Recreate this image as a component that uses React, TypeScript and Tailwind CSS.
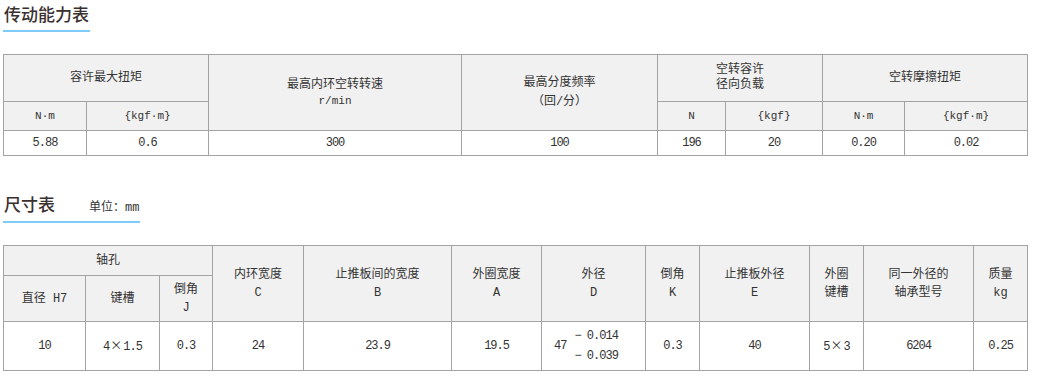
const FONT = "font-['Liberation_Mono','Noto_Sans_CJK_SC',monospace]";

function Th({ children, colSpan, rowSpan, className = "" }: { children: React.ReactNode; colSpan?: number; rowSpan?: number; className?: string }) {
  return (
    <th
      colSpan={colSpan}
      rowSpan={rowSpan}
      className={`border border-[#a3a3a3] bg-[#f1f1f1] p-0 text-center align-middle font-normal ${className}`}
    >
      {children}
    </th>
  );
}

function Td({ children, className = "" }: { children: React.ReactNode; className?: string }) {
  return (
    <td className={`border border-[#a3a3a3] bg-white p-0 text-center align-middle tracking-[-1px] ${className}`}>
      {children}
    </td>
  );
}

// full-width multiplication sign, as in the original CJK font
const X = () => <span className="font-['Noto_Sans_CJK_SC',sans-serif] tracking-normal mx-[1px]">×</span>;

function Heading({ title, unit }: { title: string; unit?: string }) {
  return (
    <div className="inline-flex items-baseline border-b-2 border-[#7fcbfa] pb-[4px] pl-[1px] pr-px">
      <span className="font-['Noto_Sans_CJK_SC',sans-serif] text-[17px] leading-[24px] font-medium text-[#3a3030]">{title}</span>
      {unit && <span className="ml-[34px] text-[12px] text-[#333]">{unit}</span>}
    </div>
  );
}

export default function App() {
  return (
    <div className={`w-[1053px] h-[386px] bg-white pl-[3px] pt-[2px] text-[12px] text-[#333] ${FONT}`}>
      <Heading title="传动能力表" />

      <table className="mt-[22px] w-[1025px] table-fixed border-collapse leading-[16px]">
        <colgroup>
          <col className="w-[83px]" />
          <col className="w-[122px]" />
          <col className="w-[253px]" />
          <col className="w-[196px]" />
          <col className="w-[68px]" />
          <col className="w-[97px]" />
          <col className="w-[82px]" />
          <col className="w-[123px]" />
        </colgroup>
        <thead>
          <tr className="h-[47px]">
            <Th colSpan={2}>容许最大扭矩</Th>
            <Th rowSpan={2}>
              <div>最高内环空转转速</div>
              <div className="text-[11px]">r/min</div>
            </Th>
            <Th rowSpan={2}>
              <div className="leading-[19px]">最高分度频率</div>
              <div className="leading-[19px]">（回/分）</div>
            </Th>
            <Th colSpan={2}>
              <div className="leading-[15px]">空转容许</div>
              <div className="leading-[15px]">径向负载</div>
            </Th>
            <Th colSpan={2}>空转摩擦扭矩</Th>
          </tr>
          <tr className="h-[29px] text-[11px]">
            <Th>N·m</Th>
            <Th>{"{kgf·m}"}</Th>
            <Th>N</Th>
            <Th>{"{kgf}"}</Th>
            <Th>N·m</Th>
            <Th>{"{kgf·m}"}</Th>
          </tr>
        </thead>
        <tbody>
          <tr className="h-[25px]">
            <Td>5.88</Td>
            <Td>0.6</Td>
            <Td>300</Td>
            <Td>100</Td>
            <Td>196</Td>
            <Td>20</Td>
            <Td>0.20</Td>
            <Td>0.02</Td>
          </tr>
        </tbody>
      </table>

      <div className="mt-[36px]">
        <Heading title="尺寸表" unit="单位：mm" />
      </div>

      <table className="mt-[22px] w-[1025px] table-fixed border-collapse leading-[18px]">
        <colgroup>
          <col className="w-[82px]" />
          <col className="w-[74px]" />
          <col className="w-[53px]" />
          <col className="w-[91px]" />
          <col className="w-[148px]" />
          <col className="w-[90px]" />
          <col className="w-[104px]" />
          <col className="w-[54px]" />
          <col className="w-[110px]" />
          <col className="w-[54px]" />
          <col className="w-[110px]" />
          <col className="w-[54px]" />
        </colgroup>
        <thead>
          <tr className="h-[30px]">
            <Th colSpan={3}>轴孔</Th>
            <Th rowSpan={2}>
              <div>内环宽度</div>
              <div>C</div>
            </Th>
            <Th rowSpan={2}>
              <div>止推板间的宽度</div>
              <div>B</div>
            </Th>
            <Th rowSpan={2}>
              <div>外圈宽度</div>
              <div>A</div>
            </Th>
            <Th rowSpan={2}>
              <div>外径</div>
              <div>D</div>
            </Th>
            <Th rowSpan={2}>
              <div>倒角</div>
              <div>K</div>
            </Th>
            <Th rowSpan={2}>
              <div>止推板外径</div>
              <div>E</div>
            </Th>
            <Th rowSpan={2}>
              <div>外圈</div>
              <div>键槽</div>
            </Th>
            <Th rowSpan={2}>
              <div>同一外径的</div>
              <div>轴承型号</div>
            </Th>
            <Th rowSpan={2}>
              <div>质量</div>
              <div>kg</div>
            </Th>
          </tr>
          <tr className="h-[46px]">
            <Th>直径 H7</Th>
            <Th>键槽</Th>
            <Th>
              <div>倒角</div>
              <div>J</div>
            </Th>
          </tr>
        </thead>
        <tbody>
          <tr className="h-[49px]">
            <Td>10</Td>
            <Td>4<X />1.5</Td>
            <Td>0.3</Td>
            <Td>24</Td>
            <Td>23.9</Td>
            <Td>19.5</Td>
            <Td>
              <div className="flex items-center pl-[12px]">
                <span>47</span>
                <div className="ml-[8px] flex flex-col items-start leading-[20px]">
                  <span>− 0.014</span>
                  <span>− 0.039</span>
                </div>
              </div>
            </Td>
            <Td>0.3</Td>
            <Td>40</Td>
            <Td>5<X />3</Td>
            <Td>6204</Td>
            <Td>0.25</Td>
          </tr>
        </tbody>
      </table>
    </div>
  );
}
